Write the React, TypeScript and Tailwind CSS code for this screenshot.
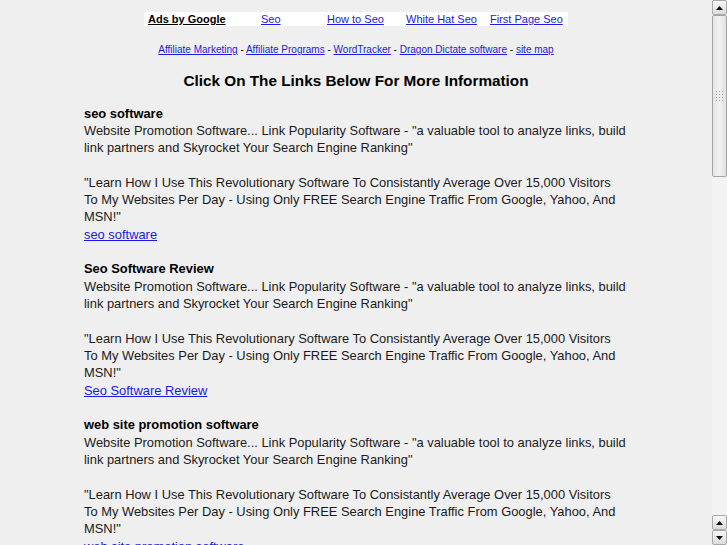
const adLinks = [
  { label: "Seo", w: "w-[66px]" },
  { label: "How to Seo", w: "w-[79px]" },
  { label: "White Hat Seo", w: "w-[84px]" },
  { label: "First Page Seo", w: "" },
];

const navLinks = ["Affiliate Marketing", "Affiliate Programs", "WordTracker", "Dragon Dictate software", "site map"];

const entries = ["seo software", "Seo Software Review", "web site promotion software"];

function Arrow({ down }: { down?: boolean }) {
  return (
    <div className="flex h-[15px] items-center justify-center rounded-[2px] border border-[#a9a9a9] bg-gradient-to-b from-[#f7f7f7] to-[#dcdcdc]">
      <svg width="7" height="4" viewBox="0 0 7 4">
        <path d={down ? "M0 0h7L3.5 4z" : "M0 4h7L3.5 0z"} fill="#111" />
      </svg>
    </div>
  );
}

function Scrollbar() {
  return (
    <div className="flex w-[15px] shrink-0 flex-col bg-[#f3f3f3]">
      <Arrow />
      <div className="flex h-[162px] items-center justify-center rounded-[2px] border border-[#a3a3a3] bg-gradient-to-r from-[#e4e4e4] via-[#f2f2f2] to-[#e0e0e0]">
        <div className="grid grid-cols-3 gap-[2px]">
          {Array.from({ length: 12 }).map((_, i) => (
            <div key={i} className="h-[1px] w-[1px] bg-[#9a9a9a]" />
          ))}
        </div>
      </div>
      <div className="flex-1" />
      <Arrow />
      <Arrow down />
    </div>
  );
}

export default function App() {
  return (
    <div
      className="flex h-[545px] overflow-hidden bg-[#efefef] text-black"
      style={{ fontFamily: '"Liberation Sans", Arial, sans-serif' }}
    >
      <div className="flex flex-1 flex-col items-center overflow-hidden pt-[12px]">
        <div className="flex h-[14px] w-[424px] items-center bg-white px-[4px] text-[11px] leading-[14px]">
          <span className="w-[113px] font-bold underline">Ads by Google</span>
          {adLinks.map((a) => (
            <span key={a.label} className={a.w}>
              <a href="#" className="text-[#1a1ae0] underline">
                {a.label}
              </a>
            </span>
          ))}
        </div>

        <div className="mt-[17px] text-[10px] leading-[14px]">
          {navLinks.map((l, i) => (
            <span key={l}>
              <a href="#" className="text-[#1a1ae0] underline">
                {l}
              </a>
              {i < navLinks.length - 1 && " - "}
            </span>
          ))}
        </div>

        <h1 className="mt-[15px] text-[15.3px] font-bold leading-[18px]">Click On The Links Below For More Information</h1>

        <div className="mt-[14.5px] w-[544px] text-[12.9px] leading-[17.33px] text-[#1a1a1a]">
          {entries.map((e) => (
            <div key={e} className="mb-[17.33px] whitespace-nowrap">
              <div className="font-bold text-black">{e}</div>
              <div>
                Website Promotion Software... Link Popularity Software - "a valuable tool to analyze links, build
                <br />
                link partners and Skyrocket Your Search Engine Ranking"
              </div>
              <div className="h-[17.33px]" />
              <div>
                "Learn How I Use This Revolutionary Software To Consistantly Average Over 15,000 Visitors
                <br />
                To My Websites Per Day - Using Only FREE Search Engine Traffic From Google, Yahoo, And
                <br />
                MSN!"
              </div>
              <a href="#" className="text-[#1a1ae0] underline">
                {e}
              </a>
            </div>
          ))}
        </div>
      </div>
      <Scrollbar />
    </div>
  );
}
